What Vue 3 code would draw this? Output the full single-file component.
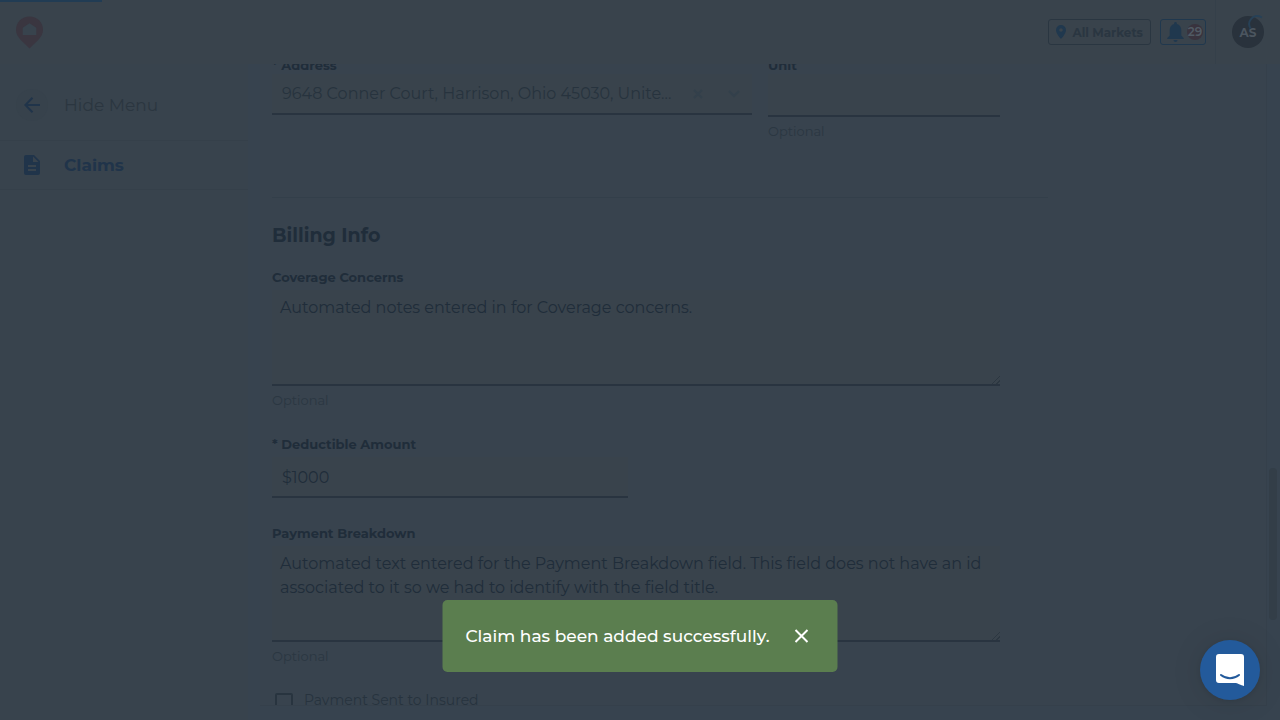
<script setup>
import { ref } from 'vue'

const address = ref('9648 Conner Court, Harrison, Ohio 45030, Unite...')
const unit = ref('')
const coverage = ref('Automated notes entered in for Coverage concerns.')
const deductible = ref('$1000')
const breakdown = ref(
  'Automated text entered for the Payment Breakdown field. This field does not have an id associated to it so we had to identify with the field title.'
)
const sentToInsured = ref(false)
const toastOpen = ref(true)
</script>

<template>
  <div class="app">
    <div class="progress"></div>
    <header class="topbar">
      <a class="logo" href="#" aria-label="Home">
        <svg width="27" height="33" viewBox="0 0 28 33">
          <path fill="#3a3640" d="M14 0C6.200 0 0 6.100 0 13.600c0 4.300 2.200 7.300 4.700 10.300L14 33l9.300-9.100c2.500-3 4.700-6 4.700-10.300C28 6.100 21.800 0 14 0z" />
          <path fill="#38434d" d="M14 7l7 4.500V19H7v-7.500z" />
        </svg>
      </a>
      <div class="tools">
        <button class="markets" type="button">
          <svg width="10" height="14" viewBox="0 0 10 14">
            <path fill="#20384e" fill-rule="evenodd" d="M5 0a5 5 0 0 0-5 5c0 3.700 5 9 5 9s5-5.300 5-9a5 5 0 0 0-5-5zm0 3.200a1.800 1.800 0 1 1 0 3.600 1.800 1.800 0 0 1 0-3.600z" />
          </svg>
          <span>All Markets</span>
        </button>
        <button class="bell" type="button" aria-label="Notifications">
          <svg width="17" height="20" viewBox="0 0 17 20">
            <path fill="#20384e" d="M8.500 0c-.8 0-1.400.6-1.400 1.400v.6C4.300 2.700 2.700 5.100 2.700 8v5.500L.3 16v1h16.400v-1l-2.400-2.500V8c0-2.900-1.600-5.300-4.400-6v-.6C9.900.6 9.300 0 8.500 0zM6.500 18a2 2 0 0 0 4 0z" />
          </svg>
          <span class="count">29</span>
        </button>
      </div>
      <div class="account">
        <button class="avatar" type="button">AS</button>
        <svg class="spinner" width="18" height="18" viewBox="0 0 18 18">
          <path fill="none" stroke="#274157" stroke-width="2" d="M3.500 13.500C-.5 7 6-2.500 15 2.500" />
        </svg>
      </div>
    </header>

    <div class="body">
      <nav class="side">
        <button class="hide" type="button">
          <span class="round">
            <svg width="16" height="16" viewBox="0 0 16 16">
              <path fill="none" stroke="#20344a" stroke-width="2" d="M16 8H1.500M8.500.8L1.400 8l7.100 7.200" />
            </svg>
          </span>
          Hide Menu
        </button>
        <a class="claims" href="#">
          <svg width="16" height="20" viewBox="0 0 16 20">
            <path fill="#20344a" fill-rule="evenodd" d="M2 0h8l6 6v12a2 2 0 0 1-2 2H2a2 2 0 0 1-2-2V2a2 2 0 0 1 2-2zm7 1.500V7h5.500zM4 10v2h8v-2zm0 4v2h8v-2z" />
          </svg>
          Claims
        </a>
      </nav>

      <main class="main">
        <form class="form" @submit.prevent>
          <div class="row">
            <div class="field address">
              <label for="address">* Address</label>
              <div class="combo">
                <input id="address" v-model="address" type="text" />
                <button type="button" aria-label="Clear address">
                  <svg width="10" height="10" viewBox="0 0 10 10"><path fill="none" stroke="#33404b" stroke-width="2" d="M1 1l8 8M9 1L1 9" /></svg>
                </button>
                <button type="button" aria-label="Show addresses">
                  <svg width="12" height="8" viewBox="0 0 12 8"><path fill="none" stroke="#33404b" stroke-width="2" d="M1 1l5 5 5-5" /></svg>
                </button>
              </div>
            </div>
            <div class="field unit">
              <label for="unit">Unit</label>
              <input id="unit" v-model="unit" class="text" type="text" />
              <p class="hint">Optional</p>
            </div>
          </div>

          <hr />
          <h2>Billing Info</h2>

          <div class="field stacked first">
            <label for="coverage">Coverage Concerns</label>
            <textarea id="coverage" v-model="coverage"></textarea>
            <p class="hint">Optional</p>
          </div>
          <div class="field stacked half">
            <label for="deductible">* Deductible Amount</label>
            <input id="deductible" v-model="deductible" class="text" type="text" />
          </div>
          <div class="field stacked">
            <label for="breakdown">Payment Breakdown</label>
            <textarea id="breakdown" v-model="breakdown"></textarea>
            <p class="hint">Optional</p>
          </div>
          <label class="check">
            <input v-model="sentToInsured" type="checkbox" />
            <span>Payment Sent to Insured</span>
          </label>
        </form>
      </main>
      <div class="track"><div class="thumb"></div></div>
    </div>

    <div v-if="toastOpen" class="toast" role="status">
      <span>Claim has been added successfully.</span>
      <button type="button" aria-label="Dismiss" @click="toastOpen = false">
        <svg width="14" height="14" viewBox="0 0 14 14"><path fill="none" stroke="#fff" stroke-width="2" d="M1 1l12 12M13 1L1 13" /></svg>
      </button>
    </div>

    <button class="chat" type="button" aria-label="Open chat">
      <svg width="28" height="32" viewBox="0 0 28 32">
        <path fill="#fff" d="M3 0h22a3 3 0 0 1 3 3v29s-3.600-1.300-8-3H3a3 3 0 0 1-3-3V3a3 3 0 0 1 3-3z" />
        <path fill="none" stroke="#235a9b" stroke-width="2" stroke-linecap="round" d="M5 21c5.200 4.200 12.800 4.200 18 0" />
      </svg>
    </button>
  </div>
</template>

<style>
body {
  margin: 0;
  background: #37434f;
}
</style>

<style scoped>
* {
  box-sizing: border-box;
}
.app {
  display: flex;
  flex-direction: column;
  height: 100vh;
  overflow: hidden;
  background: #37434f;
  color: #202d3a;
  font-family: Montserrat, Inter, "Noto Sans", sans-serif;
  font-size: 16px;
}
button,
input,
textarea {
  margin: 0;
  padding: 0;
  border: 0;
  background: none;
  color: inherit;
  font: inherit;
  outline: 0;
}
svg {
  display: block;
  flex: none;
}
.progress {
  position: absolute;
  top: 0;
  left: 0;
  width: 8%;
  height: 2px;
  background: #213c54;
}
.topbar {
  display: flex;
  flex: none;
  align-items: center;
  height: 64px;
  padding-left: 16px;
  background: #39434c;
}
.tools {
  display: flex;
  gap: 9px;
  margin-left: auto;
  padding-right: 9px;
}
.markets,
.bell {
  display: flex;
  align-items: center;
  height: 26px;
  border: 1px solid #2a3641;
  border-radius: 3px;
}
.markets {
  gap: 6px;
  padding: 0 7px;
  color: #2a3641;
  font-size: 12px;
  font-weight: 700;
}
.bell {
  gap: 3px;
  padding: 0 2px 0 6px;
  border-color: #20384e;
}
.count {
  width: 16px;
  height: 16px;
  border-radius: 8px;
  background: #39333e;
  color: #505a64;
  font-size: 12px;
  font-weight: 600;
  line-height: 16px;
  text-align: center;
}
.account {
  position: relative;
  display: flex;
  align-items: center;
  height: 64px;
  padding: 0 16px;
  border-left: 1px solid #35404a;
}
.avatar {
  width: 32px;
  height: 32px;
  border-radius: 50%;
  background: #29323c;
  color: #4b555f;
  font-size: 12px;
  font-weight: 700;
}
.spinner {
  position: absolute;
  top: 15px;
  right: 15px;
}
.body {
  display: flex;
  flex: 1;
  min-height: 0;
  padding-bottom: 14px;
  background: #37434f;
}
.side {
  display: flex;
  flex: none;
  flex-direction: column;
  width: 248px;
  margin-bottom: -14px;
  padding-top: 8px;
  background: #38434d;
}
.hide,
.claims {
  display: flex;
  align-items: center;
  border-bottom: 1px solid #35404a;
}
.hide {
  gap: 16px;
  height: 69px;
  padding: 0 16px 2px;
  color: #2b3640;
  font-size: 17px;
}
.round {
  display: grid;
  place-items: center;
  width: 32px;
  height: 32px;
  border-radius: 50%;
  background: #37424c;
}
.claims {
  gap: 24px;
  height: 49px;
  padding: 0 24px;
  color: #20344a;
  font-size: 17px;
  font-weight: 700;
  text-decoration: none;
}
.main {
  flex: 1;
  min-width: 0;
  margin-left: 12px;
  overflow: hidden;
  border-right: 1px solid #35404b;
  border-bottom: 1px solid #35404b;
  background: #38434e;
}
.form {
  display: flex;
  flex-direction: column;
  max-width: 800px;
  margin-top: -8px;
  padding: 0 12px;
}
.row {
  display: flex;
  gap: 16px;
  align-items: flex-start;
  margin-right: 48px;
}
.field {
  display: flex;
  flex-direction: column;
}
.address {
  flex: 480;
  min-width: 0;
}
.unit {
  flex: 232;
  min-width: 0;
}
.field > label {
  font-size: 13px;
  font-weight: 700;
  line-height: 18px;
}
.combo {
  display: flex;
  align-items: center;
  height: 41px;
  border-bottom: 2px solid #293440;
  background: #39434c;
}
.combo input {
  flex: 1;
  min-width: 0;
  height: 39px;
  padding-left: 10px;
  color: #27333e;
}
.combo button {
  display: grid;
  flex: none;
  place-items: center;
  width: 36px;
  height: 36px;
}
.text {
  width: 100%;
  height: 41px;
  padding: 2px 10px 0;
  border-bottom: 2px solid #293440;
  background: #39434c;
}
.unit .text {
  height: 43px;
}
.hint {
  margin: 5px 0 0;
  color: #2b3742;
  font-size: 13px;
  line-height: 18px;
}
hr {
  width: 100%;
  height: 1px;
  margin: 57px 0 26px;
  border: 0;
  background: #333f4a;
}
h2 {
  margin: 0;
  font-size: 19px;
  font-weight: 700;
  line-height: 24px;
}
.stacked {
  gap: 4px;
  margin: 26px 48px 0 0;
}
.stacked.first {
  margin-top: 20px;
}
.stacked .hint {
  margin-top: 1px;
}
.half {
  max-width: 356px;
}
textarea {
  display: block;
  width: 100%;
  height: 96px;
  padding: 6px 8px;
  border-bottom: 2px solid #293440;
  background: #39434c;
  line-height: 24px;
  resize: vertical;
}
textarea::-webkit-resizer {
  background: linear-gradient(135deg, transparent 45%, #2c3741 45% 55%, transparent 55% 75%, #2c3741 75% 85%, transparent 85%) no-repeat right bottom / 8px 8px;
}
.check {
  display: flex;
  gap: 11px;
  align-items: flex-start;
  margin: 26px 0 0 3px;
  color: #27333e;
  font-size: 14px;
  line-height: 18px;
}
.check input {
  width: 18px;
  height: 18px;
  margin-top: 2px;
  border: 2px solid #28343f;
  border-radius: 2px;
  appearance: none;
}
.track {
  flex: none;
  width: 13px;
  padding: 404px 3px 0 2px;
}
.thumb {
  height: 152px;
  border-radius: 4px;
  background: #333e48;
}
.toast {
  position: fixed;
  bottom: 48px;
  left: 50%;
  display: flex;
  gap: 25px;
  align-items: center;
  height: 72px;
  padding: 0 29px 0 23px;
  transform: translateX(-50%);
  border-radius: 5px;
  background: #5b7e4f;
  color: #fff;
  font-size: 17px;
  font-weight: 500;
  white-space: nowrap;
}
.chat {
  position: fixed;
  right: 20px;
  bottom: 20px;
  display: grid;
  place-items: center;
  width: 60px;
  height: 60px;
  border-radius: 50%;
  background: #235a9b;
  box-shadow: 0 1px 6px rgba(0, 0, 0, 0.1), 0 2px 32px rgba(0, 0, 0, 0.1);
}
</style>
